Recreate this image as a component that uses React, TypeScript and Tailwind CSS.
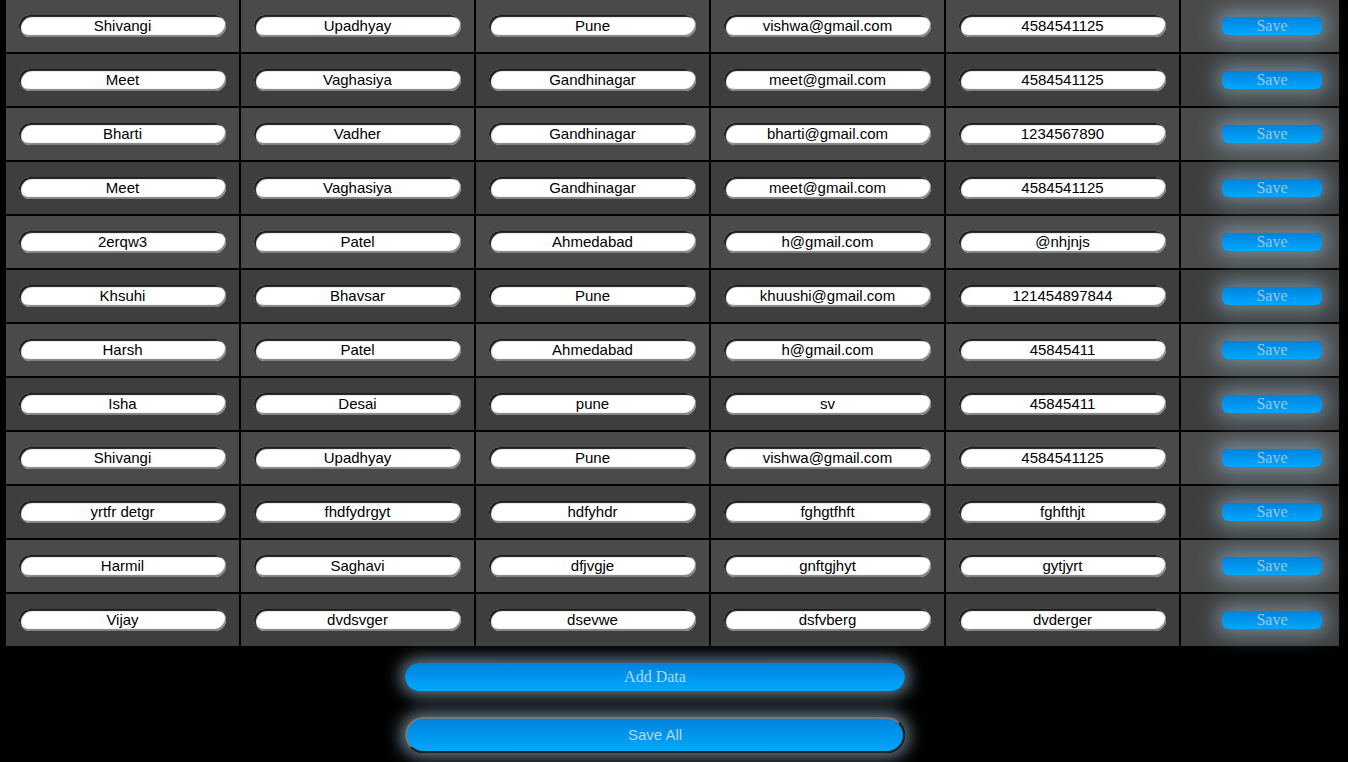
import React from 'react';

type Person = {
  first: string;
  last: string;
  city: string;
  email: string;
  phone: string;
};

const people: Person[] = [
  { first: 'Shivangi', last: 'Upadhyay', city: 'Pune', email: 'vishwa@gmail.com', phone: '4584541125' },
  { first: 'Meet', last: 'Vaghasiya', city: 'Gandhinagar', email: 'meet@gmail.com', phone: '4584541125' },
  { first: 'Bharti', last: 'Vadher', city: 'Gandhinagar', email: 'bharti@gmail.com', phone: '1234567890' },
  { first: 'Meet', last: 'Vaghasiya', city: 'Gandhinagar', email: 'meet@gmail.com', phone: '4584541125' },
  { first: '2erqw3', last: 'Patel', city: 'Ahmedabad', email: 'h@gmail.com', phone: '@nhjnjs' },
  { first: 'Khsuhi', last: 'Bhavsar', city: 'Pune', email: 'khuushi@gmail.com', phone: '121454897844' },
  { first: 'Harsh', last: 'Patel', city: 'Ahmedabad', email: 'h@gmail.com', phone: '45845411' },
  { first: 'Isha', last: 'Desai', city: 'pune', email: 'sv', phone: '45845411' },
  { first: 'Shivangi', last: 'Upadhyay', city: 'Pune', email: 'vishwa@gmail.com', phone: '4584541125' },
  { first: 'yrtfr detgr', last: 'fhdfydrgyt', city: 'hdfyhdr', email: 'fghgtfhft', phone: 'fghfthjt' },
  { first: 'Harmil', last: 'Saghavi', city: 'dfjvgje', email: 'gnftgjhyt', phone: 'gytjyrt' },
  { first: 'Vijay', last: 'dvdsvger', city: 'dsevwe', email: 'dsfvberg', phone: 'dvderger' },
];

function Field({ value }: { value: string }) {
  return (
    <input
      defaultValue={value}
      className="w-[207px] h-[22px] rounded-full bg-white text-center text-[15px] text-black font-['Liberation_Sans',Arial,sans-serif] outline-none shadow-[inset_2px_2px_1px_#1a1a1a,inset_-1px_-2px_1px_#808080]"
    />
  );
}

export default function App() {
  return (
    <div className="min-h-[762px] bg-black pl-[6px] pr-[9px] font-['Liberation_Sans',Arial,sans-serif]">
      <div className="flex flex-col gap-[2px] w-[1333px]">
        {people.map((p, i) => (
          <div key={i} className="flex gap-[2px] h-[52px]">
            {[p.first, p.last, p.city, p.email, p.phone].map((v, j) => (
              <div
                key={j}
                className={`w-[233px] flex items-center justify-center ${i % 2 === 0 ? 'bg-[#4a4a4a]' : 'bg-[#3e3e3e]'}`}
              >
                <Field value={v} />
              </div>
            ))}
            <div
              className={`flex-1 flex items-center justify-center pl-[24px] ${i % 2 === 0 ? 'bg-[#4a4a4a]' : 'bg-[#3e3e3e]'}`}
            >
              <button className="w-[100px] h-[18px] rounded-[6px] bg-gradient-to-b from-[#0082dc] to-[#00a8ff] text-[#9cc6e4] text-[16px] leading-[18px] font-['Liberation_Serif',serif] shadow-[0_0_20px_6px_rgba(165,205,230,0.5)]">
                Save
              </button>
            </div>
          </div>
        ))}
      </div>

      <div className="flex flex-col items-start pl-[399px] pt-[17px] gap-[26px]">
        <button className="w-[500px] h-[28px] rounded-full bg-gradient-to-b from-[#0082dc] to-[#00a8ff] text-[#b4d8f0] text-[16px] font-['Liberation_Serif',serif] shadow-[0_0_16px_5px_rgba(170,200,220,0.6)]">
          Add Data
        </button>
        <button className="w-[500px] h-[36px] rounded-full bg-gradient-to-b from-[#0082dc] to-[#00a8ff] text-[#b4d8f0] text-[15px] border-2 border-t-[#777] border-l-[#777] border-r-[#222] border-b-[#222] shadow-[0_0_16px_5px_rgba(170,200,220,0.6)]">
          Save All
        </button>
      </div>
    </div>
  );
}
